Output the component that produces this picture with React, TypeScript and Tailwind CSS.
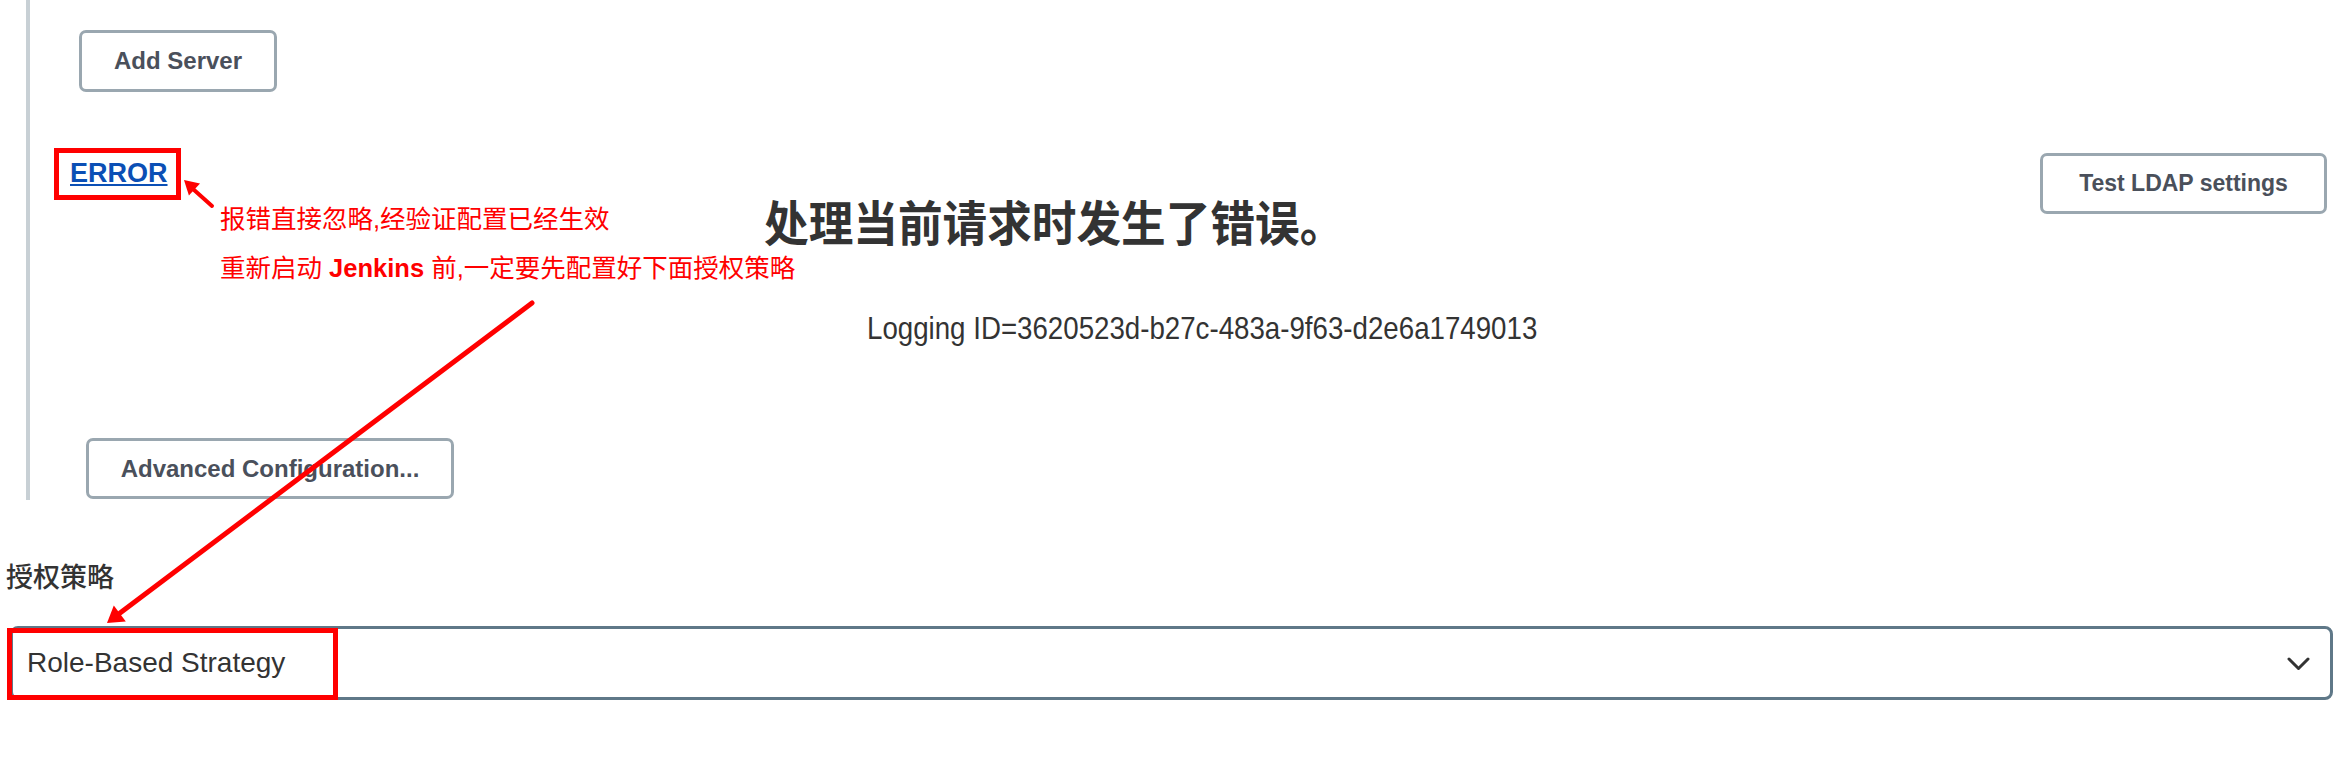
function GrayButton({ label, className }: { label: string; className: string }) {
    return (
        <button
            className={
                "flex items-center justify-center bg-white border-[3px] border-[#9aa7b0] rounded-[7px] font-bold text-[#4a505b] whitespace-nowrap " +
                className
            }
        >
            {label}
        </button>
    );
}

export default function App() {
    return (
        <div className="relative w-full min-h-[758px] bg-white overflow-hidden pl-[6px] pr-[9px] font-['Liberation_Sans','Noto_Sans_CJK_SC',sans-serif]">
            {/* LDAP server block */}
            <section className="ml-[20px] border-l-4 border-[#c8d0d5] pt-[30px] pb-[1px]">
                <GrayButton label="Add Server" className="ml-[49px] w-[198px] h-[62px] text-[24px]" />

                <div className="mt-[61px] flex items-start">
                    <div className="w-[100px] ml-[40px] mt-[4px]">
                        <a className="text-[27px] leading-[32px] font-bold text-[#0b4fb5] underline decoration-2 underline-offset-[2px]">
                            ERROR
                        </a>
                    </div>

                    <div className="ml-[594px] flex flex-col pt-[48px]">
                        <h1 className="text-[48px] leading-none font-bold text-[#333] origin-left scale-x-[0.93] whitespace-nowrap">
                            处理当前请求时发生了错误。
                        </h1>
                        <p className="mt-[63px] ml-[103px] text-[32px] leading-none text-[#333] origin-left scale-x-[0.865] whitespace-nowrap">
                            Logging ID=3620523d-b27c-483a-9f63-d2e6a1749013
                        </p>
                    </div>

                    <GrayButton label="Test LDAP settings" className="ml-auto mr-[6px] w-[287px] h-[61px] text-[23px]" />
                </div>

                <GrayButton label="Advanced Configuration..." className="mt-[94px] ml-[56px] w-[368px] h-[61px] text-[24px]" />
            </section>

            {/* authorization strategy */}
            <div className="mt-[65px] text-[27px] leading-none font-medium text-[#333]">授权策略</div>
            <div className="mt-[34px] ml-[4px] h-[74px] border-[3px] border-[#5f7888] rounded-[8px] flex items-center justify-between pl-[14px] pr-[20px] bg-white">
                <span className="text-[28px] text-[#333]">Role-Based Strategy</span>
                <svg width="23" height="14" viewBox="0 0 23 14" className="mt-[2px]">
                    <polyline points="2,2 11.5,11.5 21,2" fill="none" stroke="#333" strokeWidth="3" strokeLinecap="round" strokeLinejoin="round" />
                </svg>
            </div>

            {/* red annotations */}
            <div className="absolute left-[54px] top-[148px] w-[127px] h-[52px] border-[5px] border-[#ff0000]" />
            <div className="absolute left-[7px] top-[628px] w-[331px] h-[72px] border-[5px] border-[#ff0000]" />
            <div className="absolute left-[220px] top-[195px] text-[25.5px] leading-[49px] text-[#ff0000] whitespace-nowrap">
                <div>报错直接忽略,经验证配置已经生效</div>
                <div>
                    重新启动 <span className="font-bold">Jenkins</span> 前,一定要先配置好下面授权策略
                </div>
            </div>
            <svg className="absolute left-0 top-0 pointer-events-none" width="2342" height="758">
                <line x1="212" y1="206" x2="193" y2="189" stroke="#ff0000" strokeWidth="4" strokeLinecap="round" />
                <polygon points="184,180 200,183.6 188.9,195.4" fill="#ff0000" />
                <line x1="532" y1="303" x2="120" y2="613" stroke="#ff0000" strokeWidth="5" strokeLinecap="round" />
                <polygon points="107,623 113.8,605.4 125.8,621.4" fill="#ff0000" />
            </svg>
        </div>
    );
}
